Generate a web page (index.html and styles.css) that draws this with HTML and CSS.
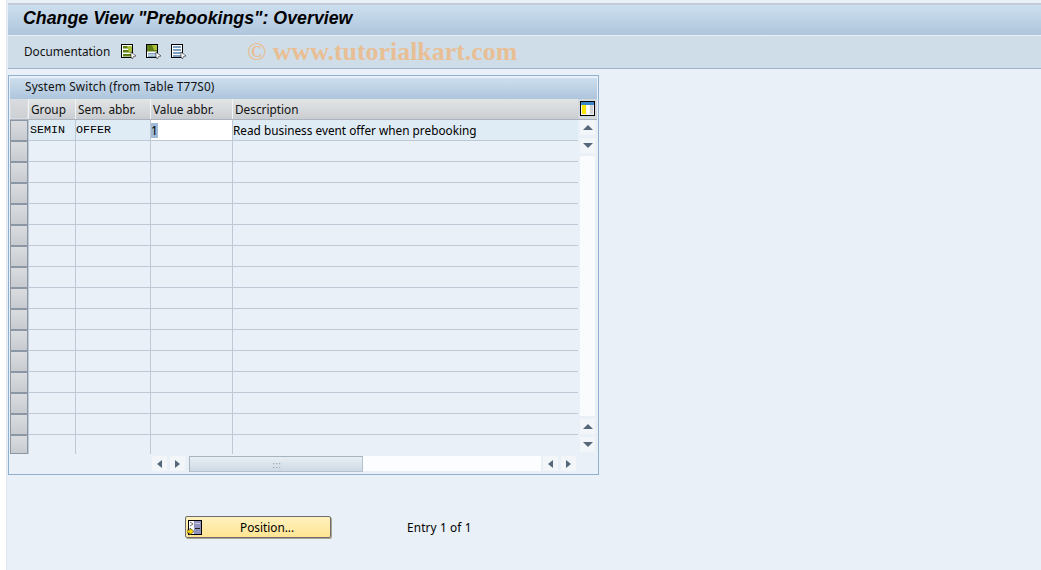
FILE: index.html
```html
<!DOCTYPE html>
<html lang="en">
<head>
<meta charset="utf-8">
<title>Change View "Prebookings": Overview</title>
<link rel="stylesheet" href="styles.css">
</head>
<body>
<div class="page">
  <header class="title-bar"><h1>Change View "Prebookings": Overview</h1></header>
  <nav class="toolbar">
    <span class="tool-text">Documentation</span>
    <span class="tool-icons">
      <svg class="doc-icon" viewBox="0 1 16 16"><rect x="1.500" y="1.500" width="11" height="13" fill="#fff" stroke="#000"/><rect x="3" y="3" width="8" height="2.500" fill="#5f7f14"/><rect x="3" y="7" width="8" height="2.500" fill="#5f7f14"/><rect x="3" y="11" width="8" height="2.500" fill="#5f7f14"/><path d="M7 3h5v7H9z" fill="#a9c13c"/><path d="M11 9l5 4-2.500 .5L12.500 16 11 14z" fill="#fff" stroke="#222" stroke-width=".6"/></svg>
      <svg class="doc-icon" viewBox="0 1 16 16"><rect x="1.500" y="1.500" width="11" height="13" fill="#fff" stroke="#000"/><rect x="2" y="2" width="10" height="6.500" fill="#5f7f14"/><path d="M7 2h5v5H9z" fill="#a9c13c"/><rect x="3" y="10" width="8" height="1.500" fill="#7d9ec0"/><rect x="3" y="12.500" width="8" height="1.500" fill="#7d9ec0"/><path d="M11 9l5 4-2.500 .5L12.500 16 11 14z" fill="#fff" stroke="#222" stroke-width=".6"/></svg>
      <svg class="doc-icon" viewBox="0 1 16 16"><rect x="1.500" y="1.500" width="11" height="13" fill="#fff" stroke="#000"/><rect x="3" y="3" width="8" height="2" fill="#7d9ec0"/><rect x="3" y="6" width="8" height="2" fill="#7d9ec0"/><rect x="3" y="9" width="8" height="2" fill="#7d9ec0"/><rect x="3" y="12" width="8" height="2" fill="#7d9ec0"/><path d="M11 9l5 4-2.500 .5L12.500 16 11 14z" fill="#fff" stroke="#222" stroke-width=".6"/></svg>
    </span>
    <span class="watermark">© www.tutorialkart.com</span>
  </nav>

  <section class="panel">
    <div class="panel-title">System Switch (from Table T77S0)</div>
    <div class="table-wrap">
      <div class="table-main">
        <div class="row head">
          <div class="sel"></div><div class="cell">Group</div><div class="cell">Sem. abbr.</div><div class="cell">Value abbr.</div><div class="cell">Description</div>
        </div>
        <div class="row first">
          <div class="sel"></div><div class="cell mono">SEMIN</div><div class="cell mono tight">OFFER</div><div class="cell input"><span class="hl">1</span></div><div class="cell text">Read business event offer when prebooking</div>
        </div>
        <div class="row"><div class="sel"></div><div class="cell"></div><div class="cell"></div><div class="cell"></div><div class="cell"></div></div>
        <div class="row"><div class="sel"></div><div class="cell"></div><div class="cell"></div><div class="cell"></div><div class="cell"></div></div>
        <div class="row"><div class="sel"></div><div class="cell"></div><div class="cell"></div><div class="cell"></div><div class="cell"></div></div>
        <div class="row"><div class="sel"></div><div class="cell"></div><div class="cell"></div><div class="cell"></div><div class="cell"></div></div>
        <div class="row"><div class="sel"></div><div class="cell"></div><div class="cell"></div><div class="cell"></div><div class="cell"></div></div>

        <div class="row"><div class="sel"></div><div class="cell"></div><div class="cell"></div><div class="cell"></div><div class="cell"></div></div>
        <div class="row"><div class="sel"></div><div class="cell"></div><div class="cell"></div><div class="cell"></div><div class="cell"></div></div>
        <div class="row"><div class="sel"></div><div class="cell"></div><div class="cell"></div><div class="cell"></div><div class="cell"></div></div>
        <div class="row"><div class="sel"></div><div class="cell"></div><div class="cell"></div><div class="cell"></div><div class="cell"></div></div>
        <div class="row"><div class="sel"></div><div class="cell"></div><div class="cell"></div><div class="cell"></div><div class="cell"></div></div>

        <div class="row"><div class="sel"></div><div class="cell"></div><div class="cell"></div><div class="cell"></div><div class="cell"></div></div>
        <div class="row"><div class="sel"></div><div class="cell"></div><div class="cell"></div><div class="cell"></div><div class="cell"></div></div>
        <div class="row"><div class="sel"></div><div class="cell"></div><div class="cell"></div><div class="cell"></div><div class="cell"></div></div>
        <div class="row"><div class="sel"></div><div class="cell"></div><div class="cell"></div><div class="cell"></div><div class="cell"></div></div>

        <div class="row last"><div class="sel"></div><div class="cell"></div><div class="cell"></div><div class="cell"></div><div class="cell"></div></div>
        <div class="hscroll">
          <span class="sbtn"><i class="arrow left"></i></span>
          <span class="sbtn"><i class="arrow right"></i></span>
          <span class="thumb"><b>:::</b></span>
          <span class="htrack"></span>
          <span class="sbtn"><i class="arrow left"></i></span>
          <span class="sbtn"><i class="arrow right"></i></span>
        </div>
      </div>
      <div class="vscroll">
        <div class="corner">
          <svg viewBox="0 0 15 15" width="15" height="15"><rect width="15" height="15" fill="#000"/><rect x="1" y="1" width="13" height="13" fill="#f4f4f4"/><rect x="1" y="1" width="13" height="3" fill="#3d86c6"/><rect x="2" y="4" width="4" height="9" fill="#ffe600"/><rect x="7" y="4" width="2" height="9" fill="#fff"/><rect x="10" y="4" width="3" height="9" fill="#cfd3d8"/></svg>
        </div>
        <span class="vbtn vbtn-first"><i class="arrow up"></i></span>
        <span class="vbtn"><i class="arrow down"></i></span>
        <span class="vtrack"></span>
        <span class="vbtn"><i class="arrow up"></i></span>
        <span class="vbtn"><i class="arrow down"></i></span>
      </div>
    </div>
  </section>

  <div class="actions">
    <button class="pos-btn" type="button">
      <svg class="pos-icon" viewBox="0 0 15 15" width="15" height="15"><rect x="1.500" y="0.500" width="13" height="14" fill="#fff" stroke="#000"/><rect x="7" y="1" width="7" height="13" fill="#8f93bd"/><rect x="8" y="8" width="5" height="1" fill="#222"/><rect x="8" y="3" width="5" height="1" fill="#c9cbe0"/><path d="M3 2l3 2-3 2" fill="none" stroke="#666"/><path d="M0 10h3V8l4 3.500-4 3.500v-2H0z" fill="#ffd800" stroke="#333" stroke-width=".6"/></svg>
      <span>Position...</span>
    </button>
    <span class="entry">Entry 1 of 1</span>
  </div>
</div>
</body>
</html>
```

FILE: styles.css
```css
* { box-sizing: border-box; }
html, body { margin: 0; padding: 0; height: 100%; }
body {
  background: #fff;
  overflow: hidden;
  font-family: "Noto Sans", sans-serif;
  font-size: 11.800px;
  color: #000;
}
.page {
  margin-left: 6px;
  height: 570px;
  background: #e9f0f7;
  border-left: 1px solid #dfe6ee;
  padding: 3px 0 0 1px;
  display: flex;
  flex-direction: column;
}
.title-bar {
  height: 33px;
  border-top: 2px solid #c3cbd6;
  background: linear-gradient(#cddfee, #aec5dc);
  border-bottom: 1px solid #e9f0f7;
  padding: 0 0 3px 15px;
  display: flex;
  align-items: center;
}
.title-bar h1 {
  margin: 0;
  font: italic bold 17.800px "Liberation Sans", sans-serif;
  color: #000;
}
.toolbar {
  position: relative;
  height: 33px;
  background: #cfdde9;
  border-bottom: 1px solid #9fb3c8;
  padding-left: 16px;
  display: flex;
  align-items: center;
}
.tool-text { color: #111; width: 96px; padding-bottom: 3px; }
.tool-icons { display: flex; gap: 9px; }
.doc-icon { width: 16px; height: 16px; display: block; }
.watermark {
  position: absolute;
  left: 239px;
  top: 1px;
  font: bold 25.900px "Liberation Serif", serif;
  color: #e8bf95;
  white-space: nowrap;
}
.panel {
  margin-top: 6px;
  width: 591px;
  height: 400px;
  border: 1px solid #8fb0cf;
  padding: 2px 1px 0 1px;
  background: #e9f0f7;
  display: flex;
  flex-direction: column;
}
.panel-title {
  height: 21px;
  flex: none;
  background: linear-gradient(#cddfee, #aec5dc);
  padding-left: 15px;
  line-height: 16px;
  letter-spacing: .15px;
  color: #111;
}
.table-wrap { display: flex; flex: 1; }
.table-main { width: 568px; }
.row {
  height: 21px;
  display: grid;
  grid-template-columns: 18px 47px 75px 82px 346px;
  border-bottom: 1px solid #bfc9d6;
}
.row .cell { border-left: 1px solid #bfc9d6; line-height: 21px; padding-left: 2px; white-space: nowrap; overflow: hidden; }
.sel {
  background: linear-gradient(#dadcdf, #c7cbd0);
  border: 1px solid #8b97a5;
  margin: 0 0 -1px 0;
}
.head {
  background: linear-gradient(#e2e4e6, #d2d5d8 70%, #c9cdd1);
  border-bottom: 1px solid #aab3be;
}
.head .sel { background: linear-gradient(#d9dbde, #cdd0d4); border-color: #d9dde2; margin: 0; }
.head .cell { border-left: 1px solid #f1f3f5; color: #111; }
.first { background: #dfebf5; }
.row .cell.mono { font: 11.700px/21px "Liberation Mono", monospace; padding-left: 1px; }
.row .cell.tight { padding-left: 0; }
.row .cell.input { background: #fff; padding-left: 0; }
.hl { display: inline-block; width: 7px; height: 15px; line-height: 15px; background: #9fb9d6; vertical-align: 0; }
.row .cell.text { padding-left: 0; }
.last { height: 19px; border-bottom: 0; }
.last .sel { margin-bottom: 0; height: 19px; }
.hscroll {
  height: 17px;
  margin-top: 2px;
  padding-left: 142px;
  display: flex;
  gap: 3px;
}
.sbtn, .vbtn {
  background: #f3f6f9;
  display: flex;
  align-items: center;
  justify-content: center;
  flex: none;
}
.sbtn { width: 15px; height: 15px; }
.thumb {
  width: 174px;
  height: 16px;
  margin-left: 1px;
  margin-right: -3px;
  background: linear-gradient(#e8eef4, #ccd8e3);
  border: 1px solid #a7b3bf;
  border-width: 1px 0 0 1px;
  box-shadow: inset -1px -1px 0 #b5c1cc;
  display: flex;
  align-items: center;
  justify-content: center;
}
.thumb b { font: 9px/8px "DejaVu Sans", sans-serif; color: #8d98a3; }
.htrack { flex: none; width: 178px; background: #fcfdfe; height: 15px; margin-right: -1px; }
.arrow { display: block; width: 0; height: 0; border: 0 solid transparent; }
.arrow.left { border-width: 4px 5px 4px 0; border-right-color: #56677a; }
.arrow.right { border-width: 4px 0 4px 5px; border-left-color: #56677a; }
.arrow.up { border-width: 0 5px 5px 5px; border-bottom-color: #56677a; }
.arrow.down { border-width: 5px 5px 0 5px; border-top-color: #56677a; }
.vscroll { width: 19px; display: flex; flex-direction: column; align-items: center; }
.corner {
  width: 19px;
  height: 21px;
  flex: none;
  background: #d5d8db;
  border-bottom: 1px solid #aab3be;
  padding-bottom: 2px;
  display: flex;
  align-items: center;
  justify-content: center;
}
.vbtn { width: 15px; height: 15px; margin-top: 3px; }
.vbtn-first { margin-top: 0; }
.vtrack { width: 15px; height: 260px; flex: none; margin-top: 3px; background: #f9fbfc; }
.actions { display: flex; align-items: center; height: 22px; margin-top: 41px; padding-left: 177px; }
.pos-btn {
  width: 146px;
  height: 22px;
  padding: 0;
  background: linear-gradient(#fff1be, #ffe493);
  border: 1px solid #6d6d6d;
  border-radius: 2px;
  box-shadow: 1px 1px 0 #a9a58e;
  font: 11.800px "Noto Sans", sans-serif;
  color: #000;
  display: flex;
  align-items: center;
}
.pos-icon { margin-left: 1px; flex: none; }
.pos-btn span { margin-left: 38px; }
.entry { margin-left: 76px; letter-spacing: .15px; }
```
